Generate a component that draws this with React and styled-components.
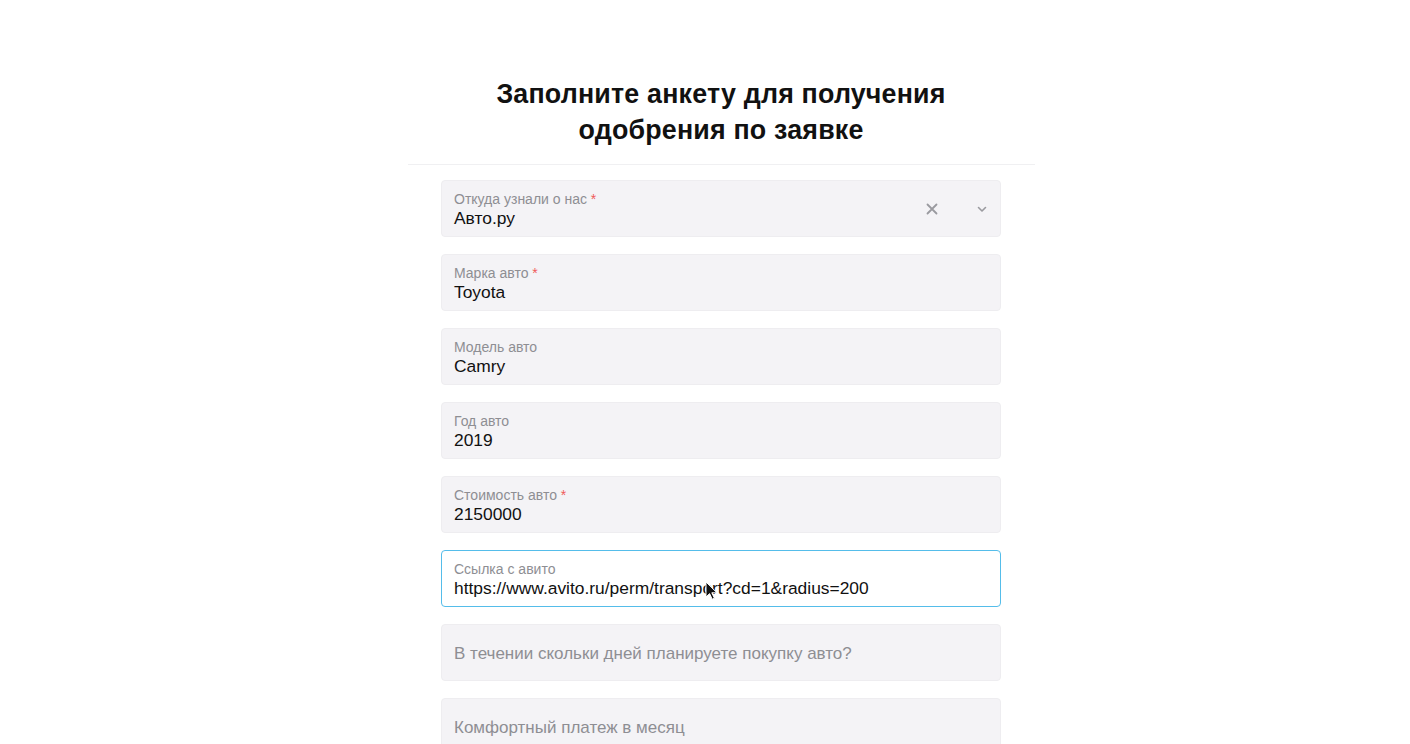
import React from "react";
import styled, { createGlobalStyle } from "styled-components";

const GlobalStyle = createGlobalStyle`
  body {
    margin: 0;
    background: #ffffff;
    font-family: "Liberation Sans", Arial, sans-serif;
  }
`;

const fields = [
  { label: "Откуда узнали о нас", required: true, value: "Авто.ру", select: true },
  { label: "Марка авто", required: true, value: "Toyota" },
  { label: "Модель авто", value: "Camry" },
  { label: "Год авто", value: "2019" },
  { label: "Стоимость авто", required: true, value: "2150000" },
  {
    label: "Ссылка с авито",
    value: "https://www.avito.ru/perm/transport?cd=1&radius=200",
    focused: true,
  },
  { placeholder: "В течении скольки дней планируете покупку авто?" },
  { placeholder: "Комфортный платеж в месяц" },
];

const App = () => {
  return (
    <>
      <GlobalStyle />
      <Page>
        <Title>
          Заполните анкету для получения
          <br />
          одобрения по заявке
        </Title>
        <Divider />
        <Form>
          {fields.map((f, i) => (
            <Field key={i} $focused={f.focused}>
              {f.placeholder ? (
                <Placeholder>{f.placeholder}</Placeholder>
              ) : (
                <Texts>
                  <Label>
                    {f.label}
                    {f.required && <Star> *</Star>}
                  </Label>
                  <Value>{f.value}</Value>
                </Texts>
              )}
              {f.select && (
                <Controls>
                  <svg width="14" height="14" viewBox="0 0 14 14">
                    <path
                      d="M2.5 2.5l9 9M11.5 2.5l-9 9"
                      stroke="#9a9a9f"
                      strokeWidth="1.8"
                      strokeLinecap="round"
                    />
                  </svg>
                  <svg width="12" height="12" viewBox="0 0 12 12">
                    <path
                      d="M2.5 4.5L6 8l3.5-3.5"
                      stroke="#9a9a9f"
                      strokeWidth="1.6"
                      fill="none"
                      strokeLinecap="round"
                      strokeLinejoin="round"
                    />
                  </svg>
                </Controls>
              )}
              {f.focused && (
                <Cursor width="14" height="20" viewBox="0 0 14 20">
                  <path
                    d="M1 1v15l3.6-3.4 2.6 5.6 2.2-1-2.6-5.4H12z"
                    fill="#111"
                    stroke="#fff"
                    strokeWidth="1"
                  />
                </Cursor>
              )}
            </Field>
          ))}
        </Form>
      </Page>
    </>
  );
};

const Page = styled.div`
  display: flex;
  flex-direction: column;
  align-items: center;
  padding-top: 76px;
  padding-left: 32px;
  height: 744px;
  box-sizing: border-box;
  overflow: hidden;
`;

const Title = styled.h1`
  margin: 0;
  font-size: 26.8px;
  line-height: 36px;
  font-weight: 700;
  color: #111;
  text-align: center;
  letter-spacing: 0.2px;
`;

const Divider = styled.div`
  flex-shrink: 0;
  width: 627px;
  height: 1px;
  background: #f0f0f2;
  margin: 16px 0 15px;
`;

const Form = styled.div`
  display: flex;
  flex-direction: column;
  gap: 17px;
  width: 560px;
`;

const Field = styled.div`
  position: relative;
  display: flex;
  flex-shrink: 0;
  align-items: center;
  height: 57px;
  box-sizing: border-box;
  padding: 0 12px;
  border-radius: 4px;
  background: ${(p) => (p.$focused ? "#ffffff" : "#f4f3f6")};
  border: ${(p) => (p.$focused ? "1.5px solid #55bdea" : "1px solid #eeedf0")};
`;

const Texts = styled.div`
  display: flex;
  flex-direction: column;
  flex: 1;
  padding-top: 2px;
`;

const Label = styled.div`
  font-size: 14px;
  line-height: 17px;
  color: #8e8e93;
`;

const Star = styled.span`
  color: #f05a5a;
`;

const Value = styled.div`
  font-size: 17.4px;
  line-height: 21px;
  color: #111;
`;

const Placeholder = styled.div`
  font-size: 17px;
  color: #8e8e93;
  flex: 1;
  padding-top: 3px;
`;

const Controls = styled.div`
  display: flex;
  align-items: center;
  gap: 37px;
`;

const Cursor = styled.svg`
  position: absolute;
  left: 263px;
  top: 30px;
`;

export default App;
